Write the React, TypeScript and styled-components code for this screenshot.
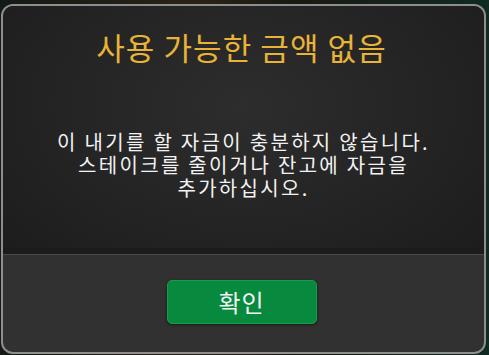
import React from "react";
import styled, { createGlobalStyle } from "styled-components";

const Global = createGlobalStyle`
  html, body { margin: 0; padding: 0; }
  body {
    width: 489px;
    height: 355px;
    overflow: hidden;
    background: #0c1410;
    font-family: "Noto Sans CJK KR", "Noto Sans", sans-serif;
  }
`;

const Backdrop = styled.div`
  width: 489px;
  height: 355px;
  box-sizing: border-box;
  padding: 4px 3px 1px 1px;
  background: linear-gradient(90deg, #141a16 0%, #2a2216 40%, #1a1a12 60%, #0f2a22 100%);
`;

const Modal = styled.div`
  box-sizing: border-box;
  width: 485px;
  height: 350px;
  border: 2px solid #8e8e8e;
  border-radius: 12px;
  overflow: hidden;
  display: flex;
  flex-direction: column;
  background: #313131;
`;

const Body = styled.div`
  flex: 1;
  display: flex;
  flex-direction: column;
  align-items: center;
  background: radial-gradient(ellipse 70% 90% at 50% 40%, #2d2d2d 0%, #232323 60%, #1c1c1c 100%);
  border-bottom: 1px solid #4a4a4a;
  box-shadow: inset 0 -6px 0 #1c1c1c;
`;

const Title = styled.h1`
  margin: 22px 0 0;
  font-size: 31px;
  font-weight: 400;
  line-height: 38px;
  color: #e9b338;
  letter-spacing: 1.1px;
  padding-right: 4px;
`;

const Message = styled.p`
  margin: 64px 0 0;
  font-size: 20px;
  line-height: 23px;
  color: #f2f2f2;
  text-align: center;
  letter-spacing: 2.3px;
`;

const Footer = styled.div`
  height: 97px;
  flex: none;
  display: flex;
  align-items: center;
  justify-content: center;
  padding: 0 4px 4px 0;
  box-sizing: border-box;
`;

const Button = styled.button`
  width: 150px;
  height: 44px;
  border: 1px solid #1a9a4e;
  border-radius: 5px;
  background: #078a3e;
  color: #f4f4f4;
  font-family: inherit;
  font-size: 24px;
  letter-spacing: 1px;
  line-height: 1;
  box-shadow: 0 1px 3px rgba(0, 0, 0, 0.5);
  cursor: pointer;
`;

export default function App() {
  return (
    <>
      <Global />
      <Backdrop>
        <Modal>
          <Body>
            <Title>사용 가능한 금액 없음</Title>
            <Message>
              이 내기를 할 자금이 충분하지 않습니다.
              <br />
              스테이크를 줄이거나 잔고에 자금을
              <br />
              추가하십시오.
            </Message>
          </Body>
          <Footer>
            <Button>확인</Button>
          </Footer>
        </Modal>
      </Backdrop>
    </>
  );
}
